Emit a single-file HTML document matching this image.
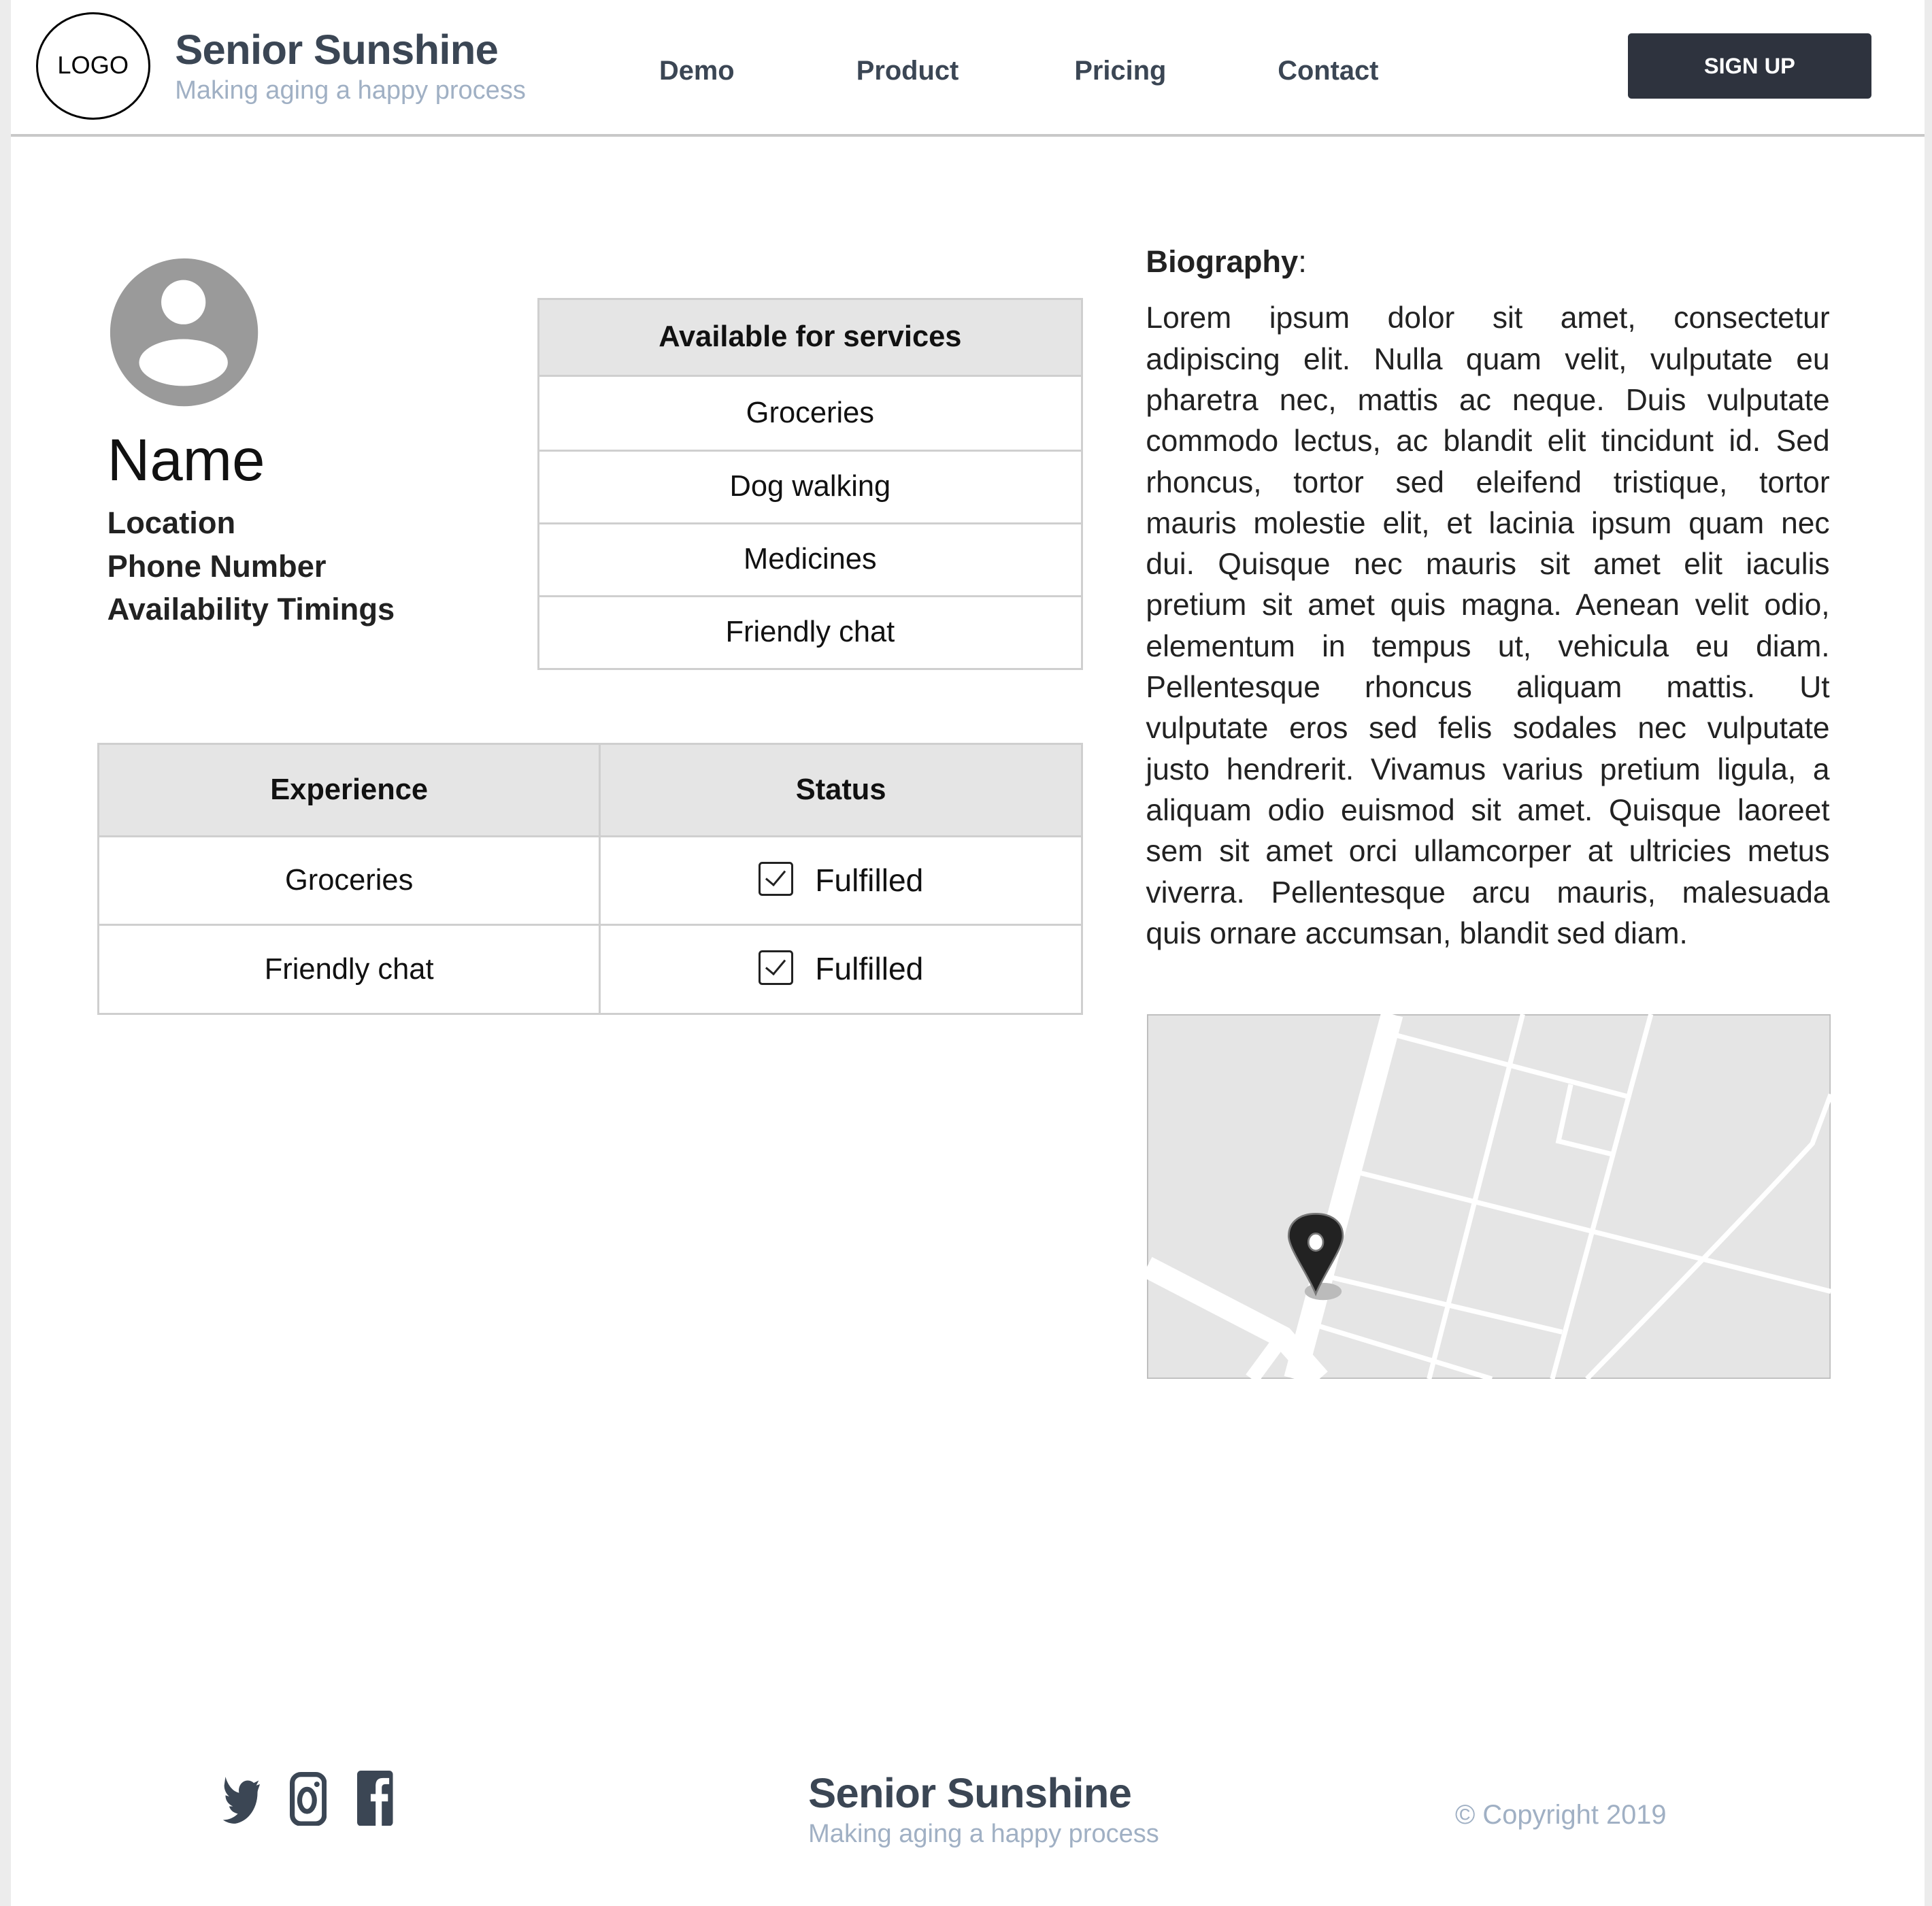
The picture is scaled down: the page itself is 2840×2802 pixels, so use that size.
<!DOCTYPE html>
<html><head><meta charset="utf-8"><style>
*{margin:0;padding:0;box-sizing:border-box}
html,body{width:2840px;height:2802px;overflow:hidden;background:#fff}
#w{zoom:1.8112;width:1568px;height:1547px;position:relative;font-family:"Liberation Sans",sans-serif;background:#fff}
.ab{position:absolute}
.strip{position:absolute;top:0;bottom:0;width:9px;background:#ececec}
.nav{font-weight:bold;color:#3b4654;font-size:22px}
table{border-collapse:collapse}
td,th{border:2px solid #cfcfcf;text-align:center;font-size:24px;color:#111}
th{background:#e5e5e5}
.ff{font-size:25.5px}
.cb{display:inline-block;width:28px;height:28px;border:2px solid #222;border-radius:3px;vertical-align:middle;margin-right:18px;position:relative;top:-3px}
.cb:after{content:"";position:absolute;left:8px;top:2px;width:7px;height:14px;border-right:2px solid #222;border-bottom:2px solid #222;transform:rotate(40deg)}
.bio div{white-space:nowrap;text-align:justify;text-align-last:justify;height:33.3px}
.bio div:last-child{text-align-last:left}
</style></head><body><div id="w">
<div class="strip" style="left:0"></div><div class="strip" style="right:0;width:6px"></div>
<div class="ab" style="left:9px;top:109px;width:1553px;height:2px;background:#c8c8c8"></div>
<div class="ab" style="left:29px;top:10px;width:93px;height:87px;border:2px solid #000;border-radius:50%;text-align:center;line-height:83px;font-size:20px">LOGO</div>
<div class="ab" style="left:142px;top:21px;font-size:34px;letter-spacing:-0.4px;font-weight:bold;color:#3b4654">Senior Sunshine</div>
<div class="ab" style="left:142px;top:62px;font-size:21px;color:#a0b0c4">Making aging a happy process</div>
<div class="ab nav" style="left:535px;top:45px">Demo</div>
<div class="ab nav" style="left:695px;top:45px">Product</div>
<div class="ab nav" style="left:872px;top:45px">Pricing</div>
<div class="ab nav" style="left:1037px;top:45px">Contact</div>
<div class="ab" style="left:1321px;top:27px;width:198px;height:53px;background:#2e333e;border-radius:3px;color:#fff;font-weight:bold;font-size:18px;text-align:center;line-height:53px">SIGN UP</div>

<svg class="ab" style="left:89px;top:209px" width="121" height="121" viewBox="0 0 121 121"><circle cx="60.5" cy="60.5" r="60" fill="#9a9a9a"/><circle cx="60" cy="36" r="18" fill="#fff"/><ellipse cx="60" cy="85" rx="36" ry="19" fill="#fff"/></svg>
<div class="ab" style="left:87px;top:346px;font-size:48px;color:#111">Name</div>
<div class="ab" style="left:87px;top:407px;font-size:25px;font-weight:bold;color:#222;line-height:35px">Location<br>Phone Number<br>Availability Timings</div>

<table class="ab" style="left:436px;top:242px;width:443px">
<tr><th style="height:62px;font-size:24px">Available for services</th></tr>
<tr><td style="height:61px">Groceries</td></tr>
<tr><td style="height:59px">Dog walking</td></tr>
<tr><td style="height:59px">Medicines</td></tr>
<tr><td style="height:59px">Friendly chat</td></tr>
</table>

<table class="ab" style="left:79px;top:603px;width:800px">
<tr><th style="height:75px;width:407px">Experience</th><th>Status</th></tr>
<tr><td style="height:72px">Groceries</td><td class="ff"><span class="cb"></span>Fulfilled</td></tr>
<tr><td style="height:72px">Friendly chat</td><td class="ff"><span class="cb"></span>Fulfilled</td></tr>
</table>

<div class="ab" style="left:930px;top:198px;font-size:25px;color:#222"><b>Biography</b>:</div>
<div class="ab bio" style="left:930px;top:242px;width:555px;font-size:24.5px;line-height:33.3px;color:#222">
<div>Lorem ipsum dolor sit amet, consectetur</div>
<div>adipiscing elit. Nulla quam velit, vulputate eu</div>
<div>pharetra nec, mattis ac neque. Duis vulputate</div>
<div>commodo lectus, ac blandit elit tincidunt id. Sed</div>
<div>rhoncus, tortor sed eleifend tristique, tortor</div>
<div>mauris molestie elit, et lacinia ipsum quam nec</div>
<div>dui. Quisque nec mauris sit amet elit iaculis</div>
<div>pretium sit amet quis magna. Aenean velit odio,</div>
<div>elementum in tempus ut, vehicula eu diam.</div>
<div>Pellentesque rhoncus aliquam mattis. Ut</div>
<div>vulputate eros sed felis sodales nec vulputate</div>
<div>justo hendrerit. Vivamus varius pretium ligula, a</div>
<div>aliquam odio euismod sit amet. Quisque laoreet</div>
<div>sem sit amet orci ullamcorper at ultricies metus</div>
<div>viverra. Pellentesque arcu mauris, malesuada</div>
<div>quis ornare accumsan, blandit sed diam.</div>
</div>

<svg class="ab" style="left:931px;top:823px" width="555" height="296" viewBox="0 0 555 296">
<rect x="0" y="0" width="555" height="296" fill="#e5e5e5" stroke="#bbb" stroke-width="2"/>
<g stroke="#fff" fill="none" stroke-width="4">
<path d="M202 17 L391 67"/><path d="M305 0 L229 296"/><path d="M409 0 L329 296"/>
<path d="M344 57 L334 103 L379 114"/><path d="M170 128 L555 225"/>
<path d="M147 213 L337 258"/><path d="M136 252 L280 296"/>
<path d="M555 65 L540 105 Q480 170 357 296"/>
</g>
<path d="M199 0 L120 296" stroke="#fff" stroke-width="18"/>
<path d="M0 205 L110 262 L140 296" stroke="#fff" stroke-width="18" fill="none"/>
<path d="M85 296 L110 262" stroke="#fff" stroke-width="12"/>
<ellipse cx="143" cy="225" rx="15" ry="7" fill="#bbb"/>
<path d="M137 227 C130 210 115 190 115 180 C115 168 125 162 137 162 C149 162 159 168 159 180 C159 190 144 210 137 227Z" fill="#222" stroke="#777" stroke-width="1.5"/>
<ellipse cx="137" cy="185" rx="6" ry="7" fill="#fff" stroke="#777" stroke-width="1.5"/>
</svg>

<svg class="ab" style="left:180px;top:1437px" width="32" height="45" viewBox="0 0 32 45"><path d="M3 5 C5 12 9 17 14 18 C13 12 17 8 21 8 C23 8 25 9 26 10 L30 8 L28 12 L31 11 C30 14 29 16 29 18 C29 30 22 41 11 43 C7 43 4 42 1 40 C6 40 10 38 13 35 C9 34 7 32 6 29 L9 29 C5 27 3 24 3 20 L6 21 C3 18 2 15 2 12 Z" fill="#3b4654"/></svg>
<svg class="ab" style="left:235px;top:1438px" width="30" height="44" viewBox="0 0 30 44"><rect x="2" y="2" width="26" height="40" rx="7" fill="none" stroke="#3b4654" stroke-width="4"/><ellipse cx="14" cy="23" rx="6" ry="9" fill="none" stroke="#3b4654" stroke-width="4"/><circle cx="22" cy="10" r="2.2" fill="#3b4654"/></svg>
<svg class="ab" style="left:290px;top:1437px" width="29" height="45" viewBox="0 0 29 45"><rect x="0" y="0" width="29" height="45" rx="3" fill="#3b4654"/><path d="M20 45 V25 H25 V19 H20 V14 C20 12 21 11 23 11 H26 V6 H21 C16 6 15 9 15 13 V19 H11 V25 H15 V45Z" fill="#fff"/></svg>

<div class="ab" style="left:656px;top:1436px;font-size:34px;letter-spacing:-0.4px;font-weight:bold;color:#3b4654">Senior Sunshine</div>
<div class="ab" style="left:656px;top:1477px;font-size:21px;color:#a0b0c4">Making aging a happy process</div>
<div class="ab" style="left:1181px;top:1461px;font-size:22px;color:#a0b0c4">© Copyright 2019</div>
</div></body></html>
